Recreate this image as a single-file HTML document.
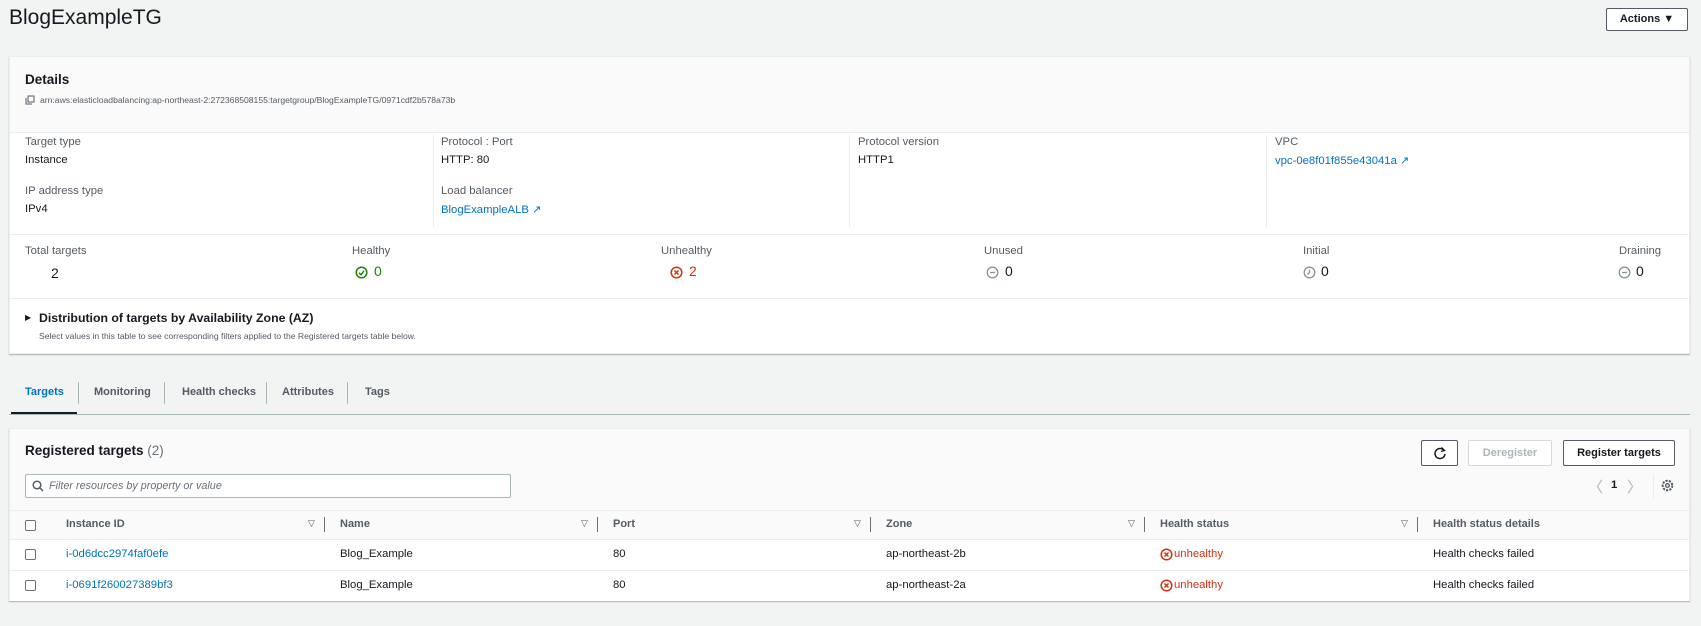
<!DOCTYPE html><html><head><style>
*{box-sizing:border-box;margin:0;padding:0}
body{width:1701px;height:626px;background:#f2f3f3;font-family:"Liberation Sans",sans-serif;color:#16191f;position:relative;overflow:hidden;font-size:11.3px}
.a{position:absolute;white-space:nowrap}
.lbl{color:#545b64}
.lnk{color:#0073bb}
.panel{position:absolute;left:9px;width:1681px;background:#fff;border:1px solid #eaeded;box-shadow:0 1px 1px rgba(0,28,36,.3)}
.btn{position:absolute;border:1px solid #545b64;background:#fff;border-radius:2px;font-weight:bold;font-size:11px;text-align:center;color:#16191f}
.hl{position:absolute;left:0;right:0;height:1px;background:#eaeded}
.vl{position:absolute;width:1px;background:#eaeded}
.cb{position:absolute;width:11px;height:11px;border:1px solid #687078;border-radius:2px;background:#fff}
.th{font-weight:bold;color:#545b64;font-size:11px}
</style></head><body>
<div class="a" style="left:9px;top:6px;font-size:21px">BlogExampleTG</div>
<div class="btn" style="left:1606px;top:8px;width:82px;height:23px;line-height:21px">Actions &#9660;</div>

<div class="panel" style="top:56px;height:298px">
 <div style="position:absolute;left:0;top:0;right:0;height:75px;background:#fafafa"></div>
 <div class="hl" style="top:75px"></div>
 <div class="a" style="left:15px;top:15px;font-size:13.5px;font-weight:bold">Details</div>
 <svg class="a" style="left:15px;top:38px" width="10" height="10" viewBox="0 0 10 10"><rect x="3" y="1" width="6" height="6" fill="none" stroke="#545b64"/><path d="M1 3v6h6" fill="none" stroke="#545b64"/></svg>
 <div class="a lbl" style="left:30px;top:38px;font-size:8.6px">arn:aws:elasticloadbalancing:ap-northeast-2:272368508155:targetgroup/BlogExampleTG/0971cdf2b578a73b</div>
 <div class="vl" style="left:423px;top:78px;height:92px"></div>
 <div class="vl" style="left:839px;top:78px;height:92px"></div>
 <div class="vl" style="left:1256px;top:78px;height:92px"></div>
 <div class="a lbl" style="left:15px;top:79px">Target type</div>
 <div class="a" style="left:15px;top:97px">Instance</div>
 <div class="a lbl" style="left:15px;top:128px">IP address type</div>
 <div class="a" style="left:15px;top:146px">IPv4</div>
 <div class="a lbl" style="left:431px;top:79px">Protocol : Port</div>
 <div class="a" style="left:431px;top:97px">HTTP: 80</div>
 <div class="a lbl" style="left:431px;top:128px">Load balancer</div>
 <div class="a lnk" style="left:431px;top:146px">BlogExampleALB <span style="font-size:11px">&#8599;</span></div>
 <div class="a lbl" style="left:848px;top:79px">Protocol version</div>
 <div class="a" style="left:848px;top:97px">HTTP1</div>
 <div class="a lbl" style="left:1265px;top:79px">VPC</div>
 <div class="a lnk" style="left:1265px;top:97px">vpc-0e8f01f855e43041a <span style="font-size:11px">&#8599;</span></div>
 <div class="hl" style="top:177px"></div>
 <div class="a lbl" style="left:15px;top:188px">Total targets</div>
 <div class="a" style="left:41px;top:208px;font-size:14px">2</div>
 <div class="a lbl" style="left:342px;top:188px">Healthy</div>
 <svg class="a" style="left:345px;top:209px" width="13" height="13"><circle cx="6.5" cy="6.5" r="5.3" fill="none" stroke="#1d8102" stroke-width="1.5"/><path d="M4 6.8l2 2 3-4" fill="none" stroke="#1d8102" stroke-width="1.4"/></svg>
 <div class="a" style="left:364px;top:206px;font-size:14px;color:#1d8102">0</div>
 <div class="a lbl" style="left:651px;top:188px">Unhealthy</div>
 <svg class="a" style="left:660px;top:209px" width="13" height="13"><circle cx="6.5" cy="6.5" r="5.3" fill="none" stroke="#d13212" stroke-width="1.5"/><path d="M4.5 4.5l4 4M8.5 4.5l-4 4" stroke="#d13212" stroke-width="1.5"/></svg>
 <div class="a" style="left:679px;top:206px;font-size:14px;color:#d13212">2</div>
 <div class="a lbl" style="left:974px;top:188px">Unused</div>
 <svg class="a" style="left:976px;top:209px" width="13" height="13"><circle cx="6.5" cy="6.5" r="5.3" fill="none" stroke="#879596" stroke-width="1.3"/><path d="M4 6.5h5" stroke="#879596" stroke-width="1.3"/></svg>
 <div class="a" style="left:995px;top:206px;font-size:14px">0</div>
 <div class="a lbl" style="left:1293px;top:188px">Initial</div>
 <svg class="a" style="left:1293px;top:209px" width="13" height="13"><circle cx="6.5" cy="6.5" r="5.3" fill="none" stroke="#879596" stroke-width="1.3"/><path d="M6.5 3.5v3l-2 2" fill="none" stroke="#879596" stroke-width="1.3"/></svg>
 <div class="a" style="left:1311px;top:206px;font-size:14px">0</div>
 <div class="a lbl" style="left:1609px;top:188px">Draining</div>
 <svg class="a" style="left:1608px;top:209px" width="13" height="13"><circle cx="6.5" cy="6.5" r="5.3" fill="none" stroke="#879596" stroke-width="1.3"/><path d="M4 6.5h5" stroke="#879596" stroke-width="1.3"/></svg>
 <div class="a" style="left:1626px;top:206px;font-size:14px">0</div>
 <div class="hl" style="top:241px"></div>
 <div class="a" style="left:15px;top:256px;font-size:8px">&#9654;</div>
 <div class="a" style="left:29px;top:254px;font-size:12.3px;font-weight:bold">Distribution of targets by Availability Zone (AZ)</div>
 <div class="a lbl" style="left:29px;top:274px;font-size:8.6px">Select values in this table to see corresponding filters applied to the Registered targets table below.</div>
</div>

<div class="a" style="left:25px;top:386px;font-weight:bold;font-size:11px;color:#0073bb">Targets</div>
<div class="a" style="left:94px;top:386px;font-weight:bold;font-size:11px;color:#545b64">Monitoring</div>
<div class="a" style="left:182px;top:386px;font-weight:bold;font-size:11px;color:#545b64">Health checks</div>
<div class="a" style="left:282px;top:386px;font-weight:bold;font-size:11px;color:#545b64">Attributes</div>
<div class="a" style="left:365px;top:386px;font-weight:bold;font-size:11px;color:#545b64">Tags</div>
<div class="vl" style="left:78px;top:382px;height:22px;background:#aab7b8"></div>
<div class="vl" style="left:164px;top:382px;height:22px;background:#aab7b8"></div>
<div class="vl" style="left:266px;top:382px;height:22px;background:#aab7b8"></div>
<div class="vl" style="left:347px;top:382px;height:22px;background:#aab7b8"></div>
<div style="position:absolute;left:9px;top:414px;width:1681px;height:1px;background:#aab7b8"></div>
<div style="position:absolute;left:11px;top:412px;width:66px;height:2px;background:#16191f"></div>

<div class="panel" style="top:428px;height:173px;background:#fafafa">
 <div class="a" style="left:15px;top:14px;font-size:13.5px;font-weight:bold">Registered targets <span style="font-weight:normal;color:#687078">(2)</span></div>
 <div style="position:absolute;left:15px;top:45px;width:486px;height:24px;border:1px solid #aab7b8;border-radius:2px;background:#fff"></div>
 <svg class="a" style="left:22px;top:51px" width="12" height="12"><circle cx="5" cy="5" r="3.8" fill="none" stroke="#545b64" stroke-width="1.5"/><path d="M8 8l3 3" stroke="#545b64" stroke-width="1.5"/></svg>
 <div class="a" style="left:39px;top:51px;font-style:italic;color:#687078;font-size:10.8px">Filter resources by property or value</div>
 <div class="btn" style="left:1411px;top:11px;width:37px;height:26px"></div>
 <svg class="a" style="left:1423px;top:17px" width="14" height="14"><path d="M11 4.5A5 5 0 1 0 12 8" fill="none" stroke="#16191f" stroke-width="1.5"/><path d="M8.5 1.5l3 3-3.5 1" fill="none" stroke="#16191f" stroke-width="1.4"/></svg>
 <div class="btn" style="left:1458px;top:11px;width:84px;height:26px;line-height:24px;border-color:#d5dbdb;color:#aab7b8">Deregister</div>
 <div class="btn" style="left:1553px;top:11px;width:112px;height:26px;line-height:24px">Register targets</div>
 <div class="a" style="left:1578px;top:47px;color:#aab7b8;font-size:15px">&#12296;</div>
 <div class="a" style="left:1601px;top:50px;font-weight:bold">1</div>
 <div class="a" style="left:1617px;top:47px;color:#aab7b8;font-size:15px">&#12297;</div>
 <div class="vl" style="left:1643px;top:45px;height:24px"></div>
 <svg class="a" style="left:1651px;top:50px" width="13" height="13"><circle cx="6.5" cy="6.5" r="4.8" fill="none" stroke="#545b64" stroke-width="2" stroke-dasharray="2.2 1.2"/><circle cx="6.5" cy="6.5" r="1.8" fill="none" stroke="#545b64" stroke-width="1.3"/></svg>
 <div style="position:absolute;left:0;right:0;top:81px;height:91px;background:#fff"></div>
 <div class="hl" style="top:81px"></div>
 <div class="hl" style="top:110px"></div>
 <div class="hl" style="top:141px"></div>
 <div style="position:absolute;left:0;right:0;top:82px;height:28px;background:#fafafa"></div>
 <div class="cb" style="left:15px;top:91px"></div>
 <div class="cb" style="left:15px;top:120px"></div>
 <div class="cb" style="left:15px;top:151px"></div>
 <div class="a th" style="left:56px;top:89px">Instance ID</div>
 <div class="a th" style="left:330px;top:89px">Name</div>
 <div class="a th" style="left:603px;top:89px">Port</div>
 <div class="a th" style="left:876px;top:89px">Zone</div>
 <div class="a th" style="left:1150px;top:89px">Health status</div>
 <div class="a th" style="left:1423px;top:89px">Health status details</div>
 <div class="a" style="left:298px;top:89px;font-size:9px;color:#545b64">&#9661;</div><div class="vl" style="left:314px;top:88px;height:15px;background:#687078"></div>
 <div class="a" style="left:571px;top:89px;font-size:9px;color:#545b64">&#9661;</div><div class="vl" style="left:587px;top:88px;height:15px;background:#687078"></div>
 <div class="a" style="left:844px;top:89px;font-size:9px;color:#545b64">&#9661;</div><div class="vl" style="left:860px;top:88px;height:15px;background:#687078"></div>
 <div class="a" style="left:1118px;top:89px;font-size:9px;color:#545b64">&#9661;</div><div class="vl" style="left:1134px;top:88px;height:15px;background:#687078"></div>
 <div class="a" style="left:1391px;top:89px;font-size:9px;color:#545b64">&#9661;</div><div class="vl" style="left:1407px;top:88px;height:15px;background:#687078"></div>
 <div class="a lnk" style="left:56px;top:119px">i-0d6dcc2974faf0efe</div>
 <div class="a" style="left:330px;top:119px">Blog_Example</div>
 <div class="a" style="left:603px;top:119px">80</div>
 <div class="a" style="left:876px;top:119px">ap-northeast-2b</div>
 <svg class="a" style="left:1150px;top:119px" width="13" height="13"><circle cx="6.5" cy="6.5" r="5.3" fill="none" stroke="#d13212" stroke-width="1.5"/><path d="M4.5 4.5l4 4M8.5 4.5l-4 4" stroke="#d13212" stroke-width="1.5"/></svg>
 <div class="a" style="left:1164px;top:119px;color:#d13212">unhealthy</div>
 <div class="a" style="left:1423px;top:119px">Health checks failed</div>
 <div class="a lnk" style="left:56px;top:150px">i-0691f260027389bf3</div>
 <div class="a" style="left:330px;top:150px">Blog_Example</div>
 <div class="a" style="left:603px;top:150px">80</div>
 <div class="a" style="left:876px;top:150px">ap-northeast-2a</div>
 <svg class="a" style="left:1150px;top:150px" width="13" height="13"><circle cx="6.5" cy="6.5" r="5.3" fill="none" stroke="#d13212" stroke-width="1.5"/><path d="M4.5 4.5l4 4M8.5 4.5l-4 4" stroke="#d13212" stroke-width="1.5"/></svg>
 <div class="a" style="left:1164px;top:150px;color:#d13212">unhealthy</div>
 <div class="a" style="left:1423px;top:150px">Health checks failed</div>
</div>
</body></html>
